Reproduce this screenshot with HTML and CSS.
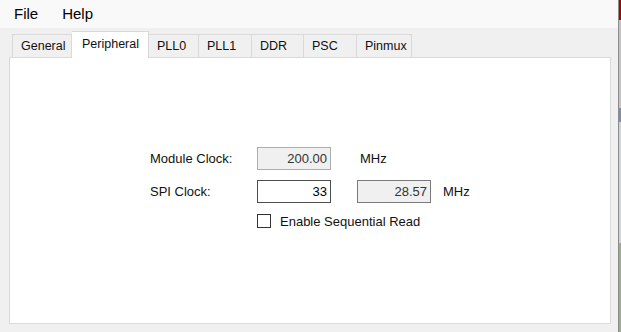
FILE: index.html
```html
<!DOCTYPE html>
<html lang="en">
<head>
  <meta charset="UTF-8">
  <title>Config</title>
  <link rel="stylesheet" href="styles.css">
</head>
<body>
<div class="screen">
  <div class="window">
    <div class="menubar">
      <span class="menu-item">File</span>
      <span class="menu-item">Help</span>
    </div>

    <div class="main">
      <div class="tabs">
        <div class="tab t-general">General</div>
        <div class="tab active t-periph">Peripheral</div>
        <div class="tab t-pll0">PLL0</div>
        <div class="tab t-pll1">PLL1</div>
        <div class="tab t-ddr">DDR</div>
        <div class="tab t-psc">PSC</div>
        <div class="tab t-pinmux">Pinmux</div>
      </div>

      <div class="panel">
        <div class="row">
          <div class="label">Module Clock:</div>
          <div class="box readonly">200.00</div>
          <div class="unit unit1">MHz</div>
        </div>
        <div class="row row2">
          <div class="label">SPI Clock:</div>
          <div class="box edit">33</div>
          <div class="box readonly dark second">28.57</div>
          <div class="unit unit2">MHz</div>
        </div>
        <div class="row row3">
          <div class="check"></div>
          <div class="check-label">Enable Sequential Read</div>
        </div>
      </div>
    </div>
  </div>

  <div class="edge">
    <div class="edge-red"></div>
    <div class="edge-mid"></div>
    <div class="edge-blue"></div>
    <div class="edge-gray"></div>
    <div class="edge-green"></div>
  </div>
</div>
</body>
</html>
```

FILE: styles.css
```css
html, body {
  margin: 0;
  padding: 0;
  height: 100%;
}

body {
  font-family: "Liberation Sans", Arial, sans-serif;
  color: #111;
  background: #f0f0f0;
}

.screen {
  display: flex;
  height: 332px;
  width: 621px;
}

.window {
  width: 618px;
  display: flex;
  flex-direction: column;
  background: #f0f0f0;
}

/* menu */
.menubar {
  height: 28px;
  background: #f9f9f9;
  display: flex;
  align-items: center;
  padding-left: 2px;
  font-size: 15px;
  color: #000;
}

.menu-item {
  padding: 0 12px;
  line-height: 28px;
}

/* tabs */
.main {
  flex: 1;
  padding: 2px 7px 0 9px;
}

.tabs {
  display: flex;
  align-items: flex-end;
  height: 27px;
  margin-left: 3px;
  font-size: 12.5px;
}

.tab {
  box-sizing: border-box;
  height: 23px;
  line-height: 23px;
  padding-left: 8px;
  white-space: nowrap;
  background: #f0f0f0;
  border: 1px solid #d9d9d9;
  border-bottom: none;
  border-left: none;
  color: #111;
}

.t-general { width: 60px; border-left: 1px solid #d9d9d9; }
.tab.active {
  height: 27px;
  line-height: 24px;
  padding-left: 10px;
  background: #fff;
  border-left: none;
  position: relative;
  top: 1px;
  z-index: 2;
}
.t-periph { width: 77px; }
.t-pll0 { width: 50px; }
.t-pll1 { width: 53px; }
.t-ddr { width: 52px; }
.t-psc { width: 53px; }
.t-pinmux { width: 55px; }

/* page */
.panel {
  box-sizing: border-box;
  height: 267px;
  background: #fff;
  border: 1px solid #dadada;
  padding: 89px 0 0 140px;
  font-size: 13px;
  position: relative;
  z-index: 1;
}

.row {
  display: flex;
  align-items: center;
  height: 23px;
}

.row2 {
  margin-top: 10px;
}

.row3 {
  margin-top: 11px;
  height: 14px;
  padding-left: 107px;
}

.label {
  width: 107px;
}

.box {
  box-sizing: border-box;
  width: 74px;
  height: 23px;
  line-height: 21px;
  text-align: right;
  padding-right: 3px;
  border: 1px solid #4d4d4d;
  background: #fff;
  color: #000;
}

.box.readonly {
  background: #f0f0f0;
  border-color: #adadad;
  color: #333;
}

.box.dark {
  border-color: #7a7a7a;
}

.second {
  margin-left: 26px;
}

.unit1 {
  margin-left: 29px;
}

.unit2 {
  margin-left: 12px;
}

.check {
  box-sizing: border-box;
  width: 14px;
  height: 14px;
  border: 1px solid #333;
  background: #fff;
}

.check-label {
  margin-left: 9px;
}

/* desktop edge behind the window */
.edge {
  width: 2px;
  border-left: 1px solid #8c8c8c;
  display: flex;
  flex-direction: column;
}

.edge-red { height: 20px; background: #b00000; }
.edge-mid { height: 88px; background: #c4c4c4; }
.edge-blue { height: 14px; background: #7e8ea8; }
.edge-gray { height: 121px; background: #cfd3d8; }
.edge-green { flex: 1; background: #9caf88; }
```
